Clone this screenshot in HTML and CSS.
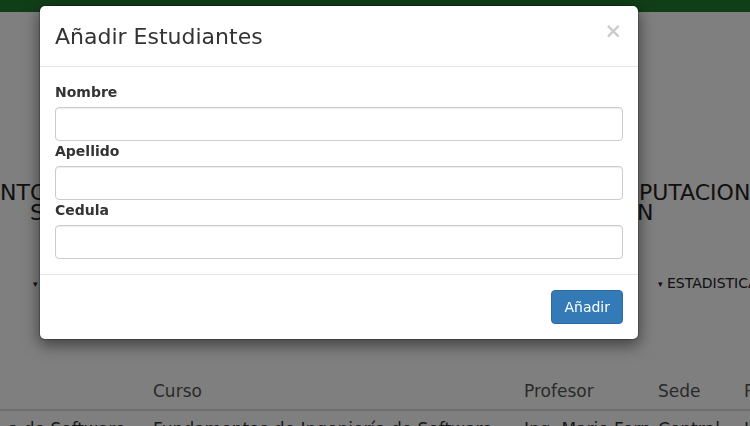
FILE: index.html
```html
<!DOCTYPE html>
<html lang="es">
<head>
<meta charset="utf-8">
<title>Añadir Estudiantes</title>
<link rel="stylesheet" href="styles.css">
</head>
<body>
<div class="page">
  <div class="navbar"></div>
  <div class="titles">
    <div class="title-left">
      <div>NTO</div>
      <div>S</div>
    </div>
    <div class="title-right">
      <div>PUTACION</div>
      <div class="second">N</div>
    </div>
  </div>
  <div class="menus">
    <div class="menu-left"><span class="caret">▾</span></div>
    <div class="menu-right"><span class="caret">▾</span> ESTADISTICAS</div>
  </div>
  <table class="grid">
    <thead>
      <tr>
        <th class="c1"></th>
        <th class="c2">Curso</th>
        <th class="c3">Profesor</th>
        <th class="c4">Sede</th>
        <th class="c5">Periodo</th>
      </tr>
    </thead>
    <tbody>
      <tr>
        <td class="c1">a de Software</td>
        <td class="c2">Fundamentos de Ingeniería de Software</td>
        <td class="c3">Ing. Mario Fernández</td>
        <td class="c4">Central</td>
        <td class="c5">I</td>
      </tr>
    </tbody>
  </table>
</div>

<div class="backdrop"></div>

<div class="modal">
  <div class="modal-header">
    <button class="close" type="button">×</button>
    <h4 class="modal-title">Añadir Estudiantes</h4>
  </div>
  <div class="modal-body">
    <div class="form-group">
      <label class="label">Nombre</label>
      <input class="input" type="text">
    </div>
    <div class="form-group">
      <label class="label">Apellido</label>
      <input class="input" type="text">
    </div>
    <div class="form-group">
      <label class="label">Cedula</label>
      <input class="input" type="text">
    </div>
  </div>
  <div class="modal-footer">
    <button class="btn-primary" type="button">Añadir</button>
  </div>
</div>
</body>
</html>
```
FILE: styles.css
```css
* { box-sizing: border-box; }

html, body {
  margin: 0;
  padding: 0;
  width: 750px;
  height: 426px;
  overflow: hidden;
  background: #ffffff;
  font-family: "DejaVu Sans", Verdana, sans-serif;
  color: #333333;
}

.page {
  width: 750px;
  height: 426px;
  overflow: hidden;
}

.navbar {
  height: 12px;
  background: #207c2e;
}

.titles {
  margin-top: 171px;
  display: flex;
  justify-content: space-between;
  font-size: 22px;
  line-height: 20px;
  color: #222222;
  height: 40px;
}

.title-left {
  width: 44px;
  text-align: right;
  white-space: nowrap;
}

.title-right {
  width: 112px;
  white-space: nowrap;
  padding-left: 1px;
}

.title-right .second {
  margin-left: -2px;
}

.menus {
  margin-top: 51px;
  display: flex;
  justify-content: space-between;
  font-size: 14px;
  line-height: 18px;
  color: #222222;
  height: 18px;
}

.menu-left {
  padding-left: 33px;
}

.menu-right {
  width: 92px;
  white-space: nowrap;
  overflow: hidden;
}

.caret {
  font-size: 9px;
  vertical-align: 1px;
}

.grid {
  margin-top: 79px;
  border-collapse: collapse;
  table-layout: fixed;
  width: 820px;
  font-size: 17px;
  color: #555555;
}

.grid th {
  font-weight: normal;
  text-align: left;
  padding: 8px 8px 6px 8px;
  line-height: 24px;
  border-bottom: 2px solid #dddddd;
  white-space: nowrap;
}

.grid td {
  padding: 6px 8px 8px 8px;
  line-height: 24px;
  white-space: nowrap;
  overflow: hidden;
  color: #333333;
}

.c1 { width: 145px; }
.c2 { width: 371px; }
.c3 { width: 134px; }
.c4 { width: 86px; }
.c5 { width: 84px; }

.backdrop {
  position: fixed;
  left: 0;
  top: 0;
  width: 750px;
  height: 426px;
  background: rgba(0, 0, 0, 0.5);
}

.modal {
  position: absolute;
  left: 39px;
  top: 5px;
  width: 600px;
  background: #ffffff;
  background-clip: padding-box;
  border: 1px solid rgba(0, 0, 0, 0.2);
  border-radius: 6px;
  box-shadow: 0 5px 15px rgba(0, 0, 0, 0.5);
}

.modal-header {
  padding: 16px 15px 14px 15px;
  border-bottom: 1px solid #e5e5e5;
}

.modal-title {
  margin: 0;
  font-size: 22px;
  line-height: 30px;
  font-weight: normal;
  color: #333333;
}

.close {
  float: right;
  margin: -1px 1px 0 0;
  padding: 0;
  border: 0;
  background: transparent;
  font-family: "DejaVu Sans", sans-serif;
  font-size: 21px;
  font-weight: bold;
  line-height: 1;
  color: #000000;
  opacity: 0.2;
  cursor: pointer;
}

.modal-body {
  padding: 15px;
}

.form-group {
  margin: 0;
}

.label {
  display: block;
  font-size: 14px;
  line-height: 20px;
  font-weight: bold;
  margin-bottom: 5px;
  color: #333333;
}

.input {
  display: block;
  width: 100%;
  height: 34px;
  padding: 6px 12px;
  font-size: 14px;
  border: 1px solid #cccccc;
  border-radius: 4px;
  background: #ffffff;
  box-shadow: inset 0 1px 1px rgba(0, 0, 0, 0.075);
  font-family: "DejaVu Sans", sans-serif;
}

.modal-footer {
  padding: 15px;
  border-top: 1px solid #e5e5e5;
  text-align: right;
}

.btn-primary {
  display: inline-block;
  padding: 6px 12px;
  font-family: "DejaVu Sans", sans-serif;
  font-size: 14px;
  line-height: 20px;
  color: #ffffff;
  background: #337ab7;
  border: 1px solid #2e6da4;
  border-radius: 4px;
  vertical-align: top;
}
```
